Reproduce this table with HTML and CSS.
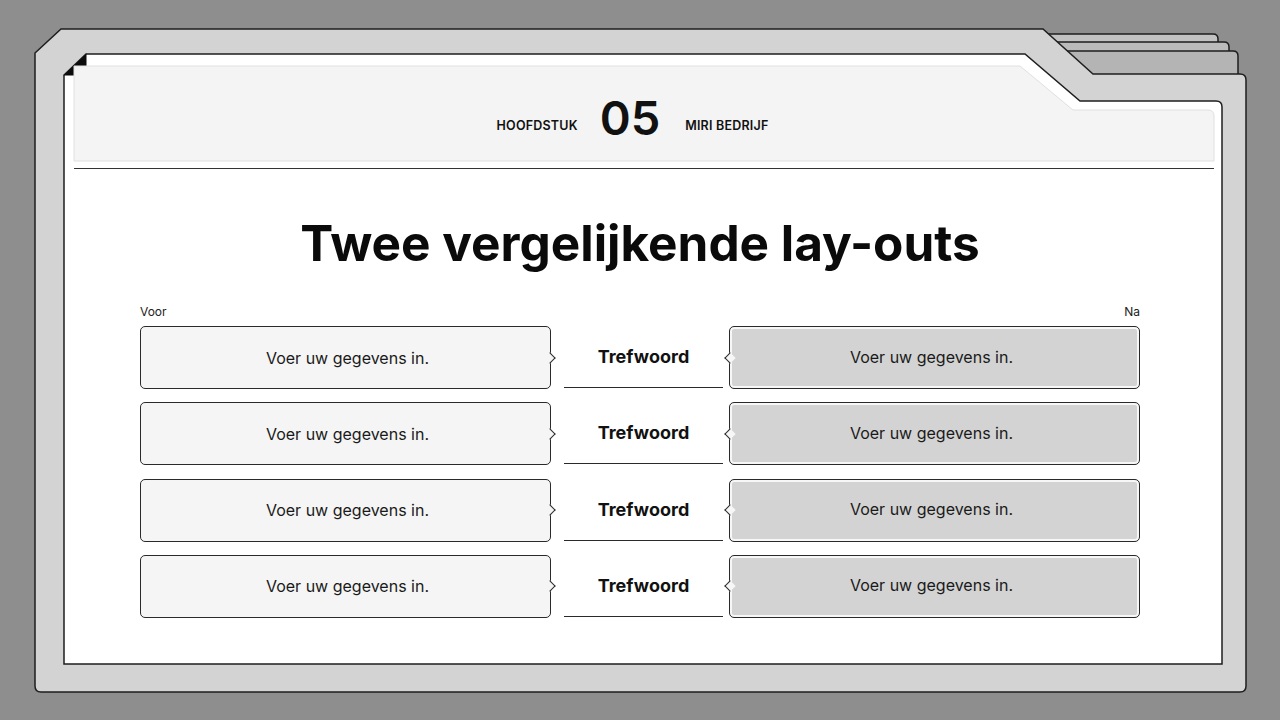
FILE: index.html
```html
<!DOCTYPE html>
<html lang="nl">
<head>
<meta charset="utf-8">
<title>Twee vergelijkende lay-outs</title>
<link rel="stylesheet" href="styles.css">
</head>
<body>
<div class="stage">
  <svg class="frame" width="1280" height="720" viewBox="0 0 1280 720" aria-hidden="true">
    <path d="M1000,34 L1213,34 Q1218,34 1218,39 L1218,80 L1000,80 Z" fill="#c2c2c2" stroke="#1e1e1e" stroke-width="1.5"/>
    <path d="M1000,42 L1224,42 Q1229,42 1229,47 L1229,80 L1000,80 Z" fill="#bbbbbb" stroke="#1e1e1e" stroke-width="1.5"/>
    <path d="M1000,51 L1233,51 Q1238,51 1238,56 L1238,80 L1000,80 Z" fill="#b4b4b4" stroke="#1e1e1e" stroke-width="1.5"/>
    <path d="M35,53 L61,29 L1043,29 L1093,74 L1240,74 Q1246,74 1246,80 L1246,686 Q1246,692 1240,692 L41,692 Q35,692 35,686 Z" fill="#d3d3d3" stroke="#1e1e1e" stroke-width="1.5"/>
    <path d="M64,75 L86,54 L1025,54 L1080,101 L1216,101 Q1222,101 1222,107 L1222,664 L64,664 Z" fill="#ffffff" stroke="#1e1e1e" stroke-width="1.5"/>
    <path d="M63.5,75.5 L86.5,53.5 L86.5,75.5 Z" fill="#0c0c0c"/>
    <path d="M74,66 L1020,66 L1073,110 L1208,110 Q1214,110 1214,116 L1214,161 L74,161 Z" fill="#f4f4f4" stroke="#e0e0e0" stroke-width="1"/>
  </svg>

  <main class="slide">
    <header class="chapter">
      <span class="chapter-label">HOOFDSTUK</span>
      <span class="chapter-num">05</span>
      <span class="chapter-label">MIRI BEDRIJF</span>
    </header>
    <div class="rule"></div>

    <h1 class="title">Twee vergelijkende lay-outs</h1>

    <section class="compare">
      <div class="labels">
        <span>Voor</span>
        <span>Na</span>
      </div>
      <div class="rows">
        <div class="box before">Voer uw gegevens in.</div>
        <div class="keyword">Trefwoord</div>
        <div class="box after">Voer uw gegevens in.</div>

        <div class="box before">Voer uw gegevens in.</div>
        <div class="keyword">Trefwoord</div>
        <div class="box after">Voer uw gegevens in.</div>

        <div class="box before">Voer uw gegevens in.</div>
        <div class="keyword">Trefwoord</div>
        <div class="box after">Voer uw gegevens in.</div>

        <div class="box before">Voer uw gegevens in.</div>
        <div class="keyword">Trefwoord</div>
        <div class="box after">Voer uw gegevens in.</div>
      </div>
    </section>
  </main>
</div>
</body>
</html>
```

FILE: styles.css
```css
* { box-sizing: border-box; }

html, body {
  margin: 0;
  padding: 0;
  background: #8e8e8e;
}

body {
  font-family: Inter, "Noto Sans", "Liberation Sans", sans-serif;
  color: #111;
}

.stage {
  position: relative;
  width: 1280px;
  height: 720px;
  overflow: hidden;
  padding: 66px 66px 0 74px;
}

.frame {
  position: absolute;
  left: 0;
  top: 0;
}

.slide {
  position: relative;
  width: 1140px;
  display: flex;
  flex-direction: column;
}

.chapter {
  height: 95px;
  padding-top: 8px;
  padding-right: 23px;
  display: flex;
  align-items: center;
  justify-content: center;
}

.chapter-label {
  font-size: 12.5px;
  font-weight: 600;
  letter-spacing: 0.2px;
  margin-top: 16px;
}

.chapter-num {
  margin: 0 25px 0 22px;
  font-size: 47px;
  font-weight: 600;
  line-height: 1;
  letter-spacing: 0;
}

.rule {
  margin-top: 7px;
  height: 1px;
  background: #333;
}

.title {
  margin: 43px 0 0;
  padding-right: 8px;
  text-align: center;
  font-size: 49.5px;
  font-weight: 700;
  line-height: 62px;
  letter-spacing: 0;
  color: #0a0a0a;
}

.compare {
  margin: 30px 66px 0;
  width: 1000px;
}

.labels {
  display: flex;
  justify-content: space-between;
  font-size: 12px;
  line-height: 16px;
  color: #222;
}

.rows {
  margin-top: 6px;
  display: grid;
  grid-template-columns: 411px 1fr 411px;
  grid-auto-rows: 63px;
  row-gap: 13.3px;
}

.box {
  position: relative;
  display: flex;
  align-items: center;
  justify-content: center;
  border: 1px solid #2a2a2a;
  border-radius: 5px;
  font-size: 16px;
  color: #1a1a1a;
}

.box::after {
  content: "";
  position: absolute;
  top: 50%;
  width: 7px;
  height: 7px;
  margin-top: -4px;
  transform: rotate(45deg);
}

.before {
  background: #f5f5f5;
  padding-left: 4px;
}

.before::after {
  right: -4px;
  background: #f5f5f5;
  border-top: 1px solid #2a2a2a;
  border-right: 1px solid #2a2a2a;
}

.after {
  background: #d3d3d3;
  box-shadow: inset 0 0 0 2px #f7f7f7;
  padding-bottom: 2px;
  padding-right: 6px;
}

.after::after {
  left: -4px;
  background: #f7f7f7;
  border-bottom: 1px solid #2a2a2a;
  border-left: 1px solid #2a2a2a;
}

.keyword {
  margin: 0 6px 1px 13px;
  display: flex;
  align-items: center;
  justify-content: center;
  border-bottom: 1px solid #2a2a2a;
  font-size: 18px;
  font-weight: 700;
  color: #111;
}
```
